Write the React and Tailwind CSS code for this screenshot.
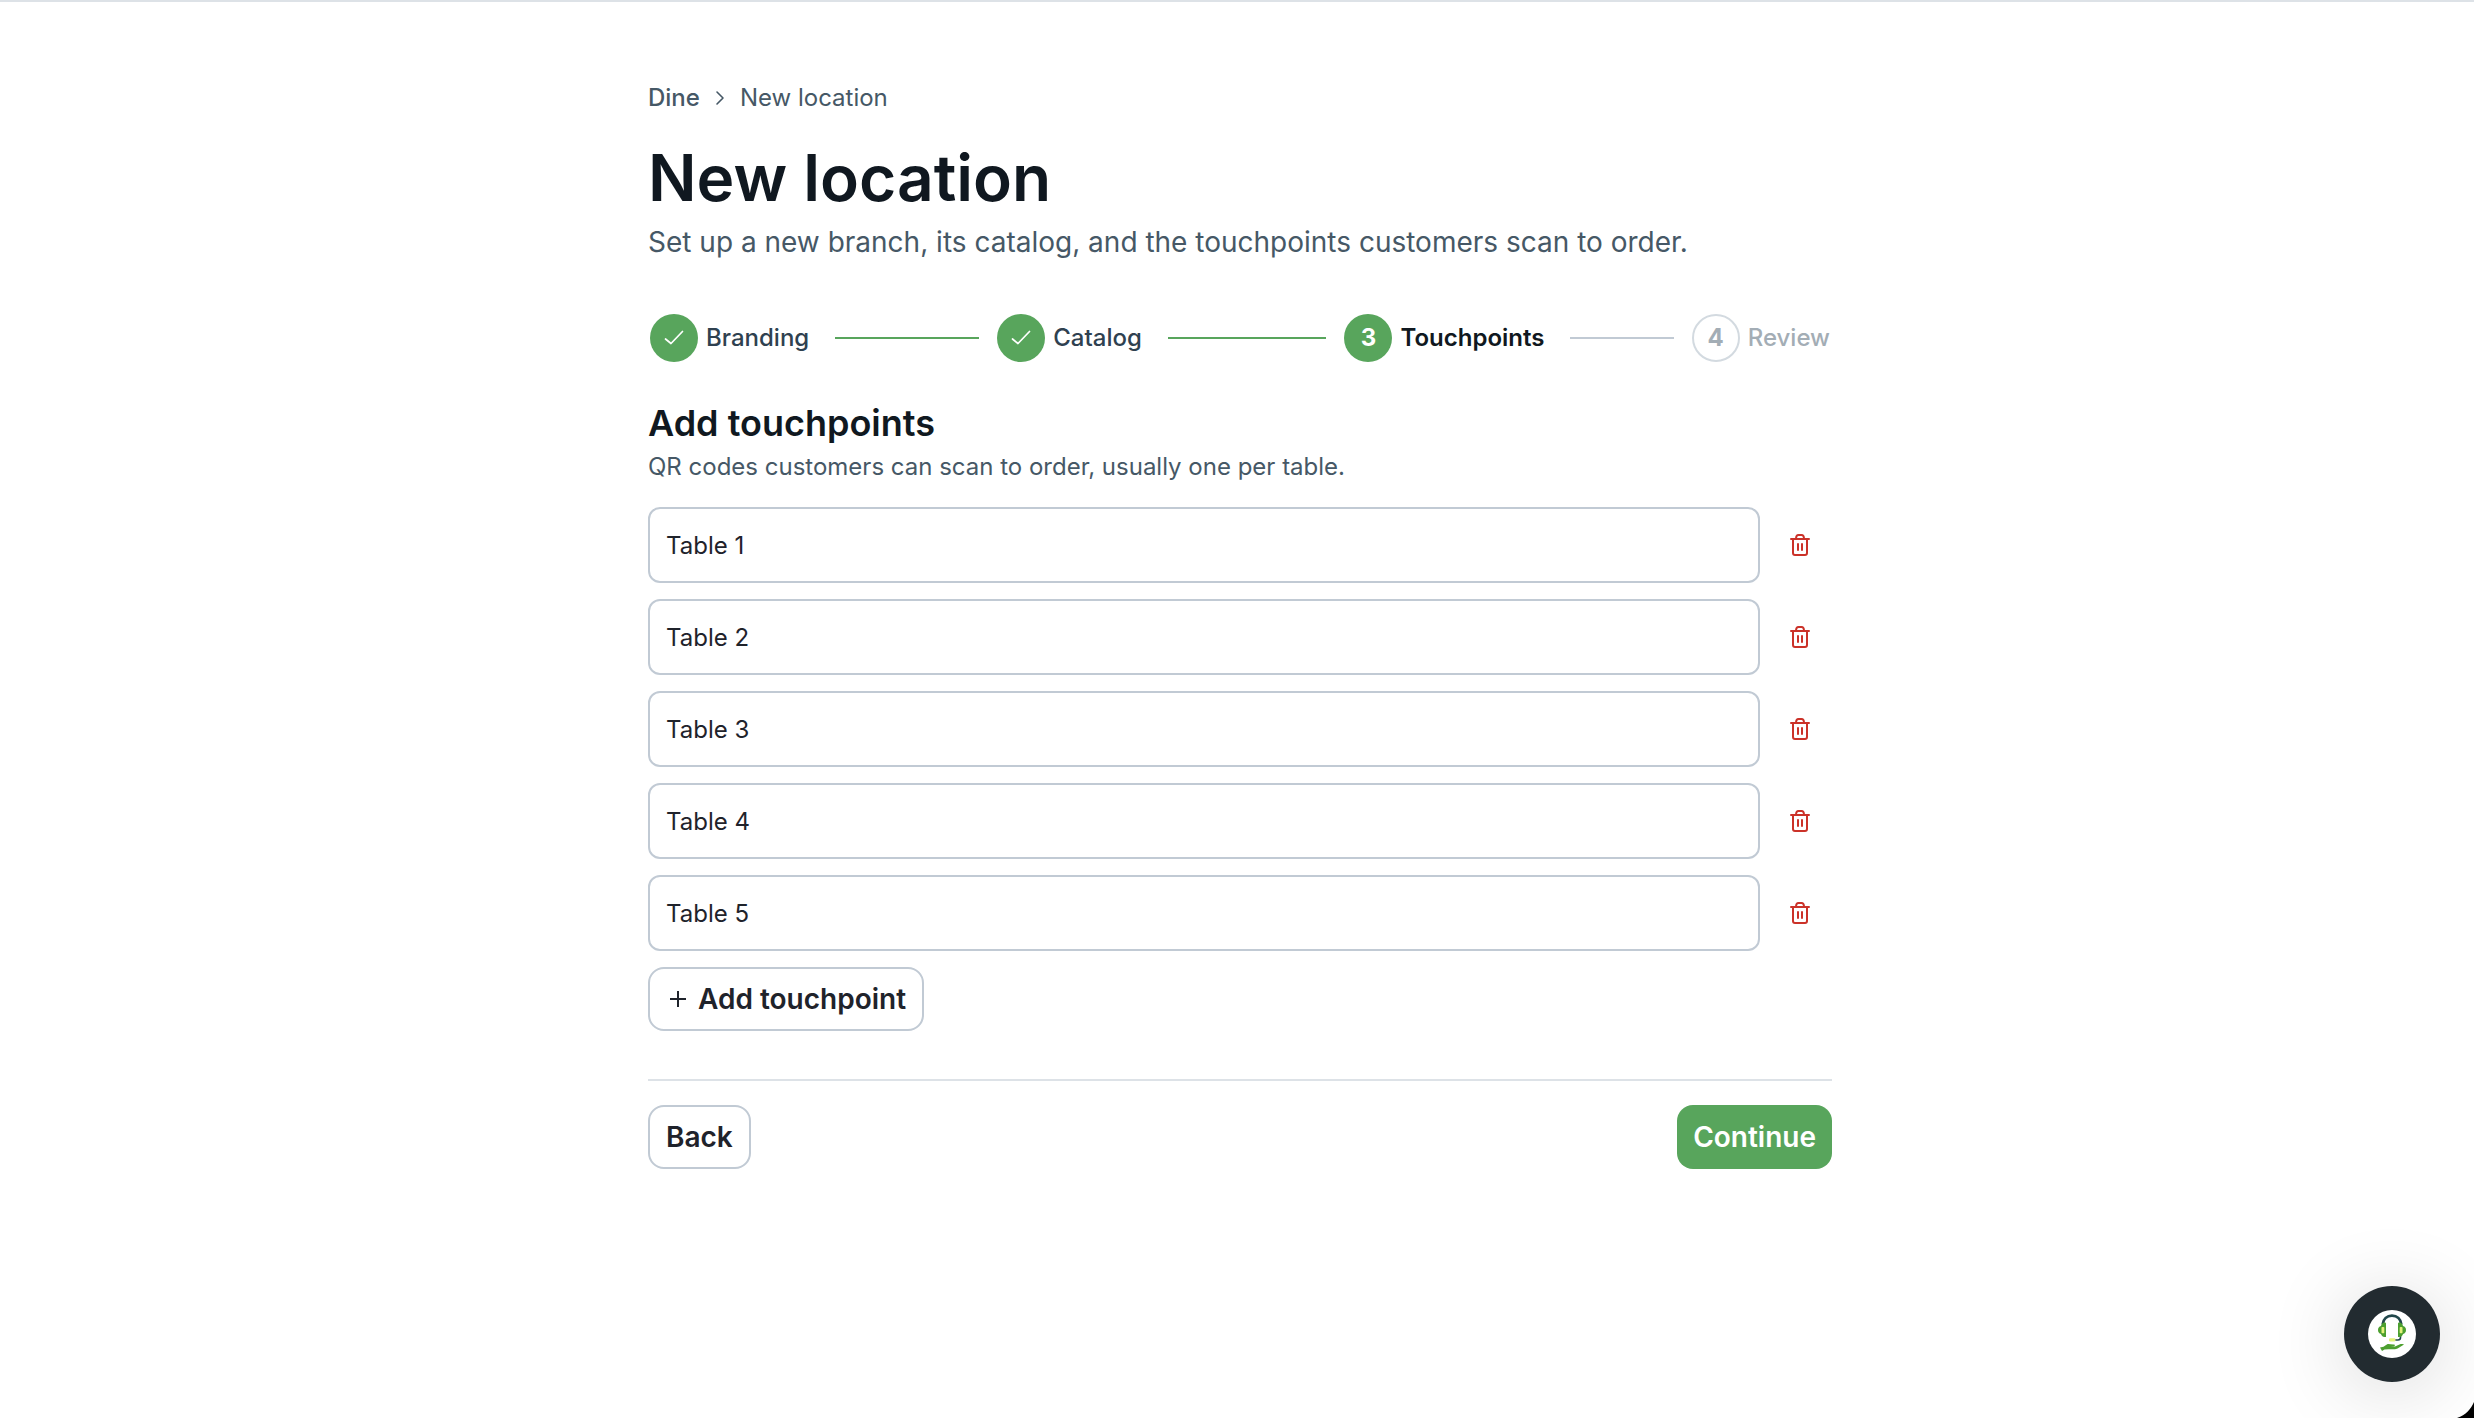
import { useState } from "react";

const STEPS = ["Branding", "Catalog", "Touchpoints", "Review"];
const CURRENT = 2;

function CheckIcon() {
  return (
    <svg viewBox="0 0 24 24" className="size-6" fill="none" stroke="currentColor" strokeWidth="1.7" strokeLinecap="round" strokeLinejoin="round" aria-hidden="true">
      <path d="M3.5 13 9 17.500 20.500 5.500" />
    </svg>
  );
}

function TrashIcon() {
  return (
    <svg viewBox="0 0 24 24" className="size-6" fill="none" stroke="currentColor" strokeWidth="2" strokeLinecap="round" strokeLinejoin="round" aria-hidden="true">
      <path d="M3 6h18M8 6c0-2.600 1-4 2.500-4h3C15 2 16 3.400 16 6M5 6v14a2 2 0 0 0 2 2h10a2 2 0 0 0 2-2V6" />
      <path d="M10 11v6M14 11v6" />
    </svg>
  );
}

function SupportIcon() {
  return (
    <svg viewBox="0 0 48 48" className="size-12" fill="none" aria-hidden="true">
      <circle cx="24" cy="24" r="24" fill="#fff" />
      {/* headset */}
      <path d="M14.700 14.500C15.200 9 19 5.700 24 5.700s8.800 3.300 9.300 8.800" stroke="#21474b" strokeWidth="2.800" />
      <path d="M32.500 26v1.500q0 2.500-2.500 2.500H27" stroke="#21474b" strokeWidth="1.600" />
      <path d="M18 13.500V27h-1.500c-2 0-3.200-1.500-3.500-3-2-.500-3-2-3-4s1-3.500 3-4c.300-1.500 1.500-3.500 3.500-3.500.900 0 1.500.400 1.500 1z" fill="#4c9f2f" />
      <path d="M30 13.500V27h1.500c2 0 3.200-1.500 3.500-3 2-.500 3-2 3-4s-1-3.500-3-4c-.300-1.500-1.500-3.500-3.500-3.500-.900 0-1.500.400-1.500 1z" fill="#4c9f2f" />
      <rect x="13.500" y="17" width="2.800" height="6.200" rx=".8" fill="#e3f27a" />
      <rect x="31.700" y="17" width="2.800" height="6.200" rx=".8" fill="#e3f27a" />
      <rect x="21" y="28.300" width="6.500" height="3.200" rx="1.300" fill="#e3f27a" />
      {/* open hand */}
      <path d="M12 37.500l3.500-.8 3.700-2.500c1.800-.5 4 .5 6.800.3 1.300 0 1.300 1.500 0 1.700l-3.500.3h4.500l5-2.300c1.500-.5 3.500-.2 4 .3l-6 3.800c-1.500.8-2.500 1-4 1h-5.500l-4 .2-2.500 1.500z" fill="#4c9f2f" />
    </svg>
  );
}

function Step({ label, index }) {
  const done = index < CURRENT;
  const active = index === CURRENT;
  const last = index === STEPS.length - 1;

  return (
    <li className={`flex items-center ${last ? "" : "flex-1"}`} aria-current={active ? "step" : undefined}>
      <span
        className={`flex size-12 shrink-0 items-center justify-center rounded-full text-2xl font-bold ${
          done || active ? "bg-[#58a55c] text-white" : "border-2 border-[#d3dae0] text-[#a3adb5]"
        }`}
      >
        {done ? <CheckIcon /> : index + 1}
      </span>
      <span
        className={`ml-2 text-2xl ${
          active ? "font-semibold text-[#101820]" : done ? "font-medium text-[#2f4150]" : "font-medium text-[#a3adb5]"
        }`}
      >
        {label}
      </span>
      {!last && <span className={`ml-[26px] mr-[18px] h-0.5 flex-1 ${done ? "bg-[#58a55c]" : "bg-[#c1cad4]"}`} />}
    </li>
  );
}

export default function App() {
  const [tables, setTables] = useState(["Table 1", "Table 2", "Table 3", "Table 4", "Table 5"]);

  const rename = (i, value) => setTables(tables.map((t, n) => (n === i ? value : t)));
  const remove = (i) => setTables(tables.filter((_, n) => n !== i));
  const add = () => setTables([...tables, `Table ${tables.length + 1}`]);

  return (
    <div className="min-h-screen border-t-2 border-[#dde2e7] bg-white pl-1.5 font-['Inter',sans-serif] text-[#1f232b]">
      <main className="mx-auto max-w-[1184px] pt-20 pb-24">
        <nav aria-label="Breadcrumb" className="flex items-center gap-3 text-2xl text-[#465866]">
          <a href="#" className="font-medium">Dine</a>
          <svg viewBox="0 0 16 16" className="size-4" fill="none" stroke="currentColor" strokeWidth="1.6" strokeLinecap="round" strokeLinejoin="round" aria-hidden="true">
            <path d="M5 2l6 6-6 6" />
          </svg>
          <span>New location</span>
        </nav>

        <h1 className="mt-6 text-[64px] leading-[80px] font-semibold text-[#101820]">New location</h1>
        <p className="mt-1 text-[28px] leading-10 text-[#465866]">
          Set up a new branch, its catalog, and the touchpoints customers scan to order.
        </p>

        {/* Wizard progress */}
        <ol className="mt-13 flex px-0.5">
          {STEPS.map((label, i) => (
            <Step key={label} label={label} index={i} />
          ))}
        </ol>

        <h2 className="mt-[37px] text-4xl leading-12 font-semibold text-[#101820]">Add touchpoints</h2>
        <p className="mt-1 text-2xl text-[#465866]">QR codes customers can scan to order, usually one per table.</p>

        <ul className="mt-6 space-y-4">
          {tables.map((name, i) => (
            <li key={i} className="flex items-center gap-2">
              <input
                aria-label={`Touchpoint ${i + 1}`}
                value={name}
                onChange={(e) => rename(i, e.target.value)}
                className="h-19 min-w-0 flex-1 rounded-xl border-2 border-[#c1cad4] bg-white px-4 text-2xl"
              />
              <button
                type="button"
                aria-label={`Remove ${name}`}
                onClick={() => remove(i)}
                className="flex size-16 items-center justify-center text-[#cb3229]"
              >
                <TrashIcon />
              </button>
            </li>
          ))}
        </ul>

        <button
          type="button"
          onClick={add}
          className="mt-4 flex h-16 items-center gap-2 rounded-2xl border-2 border-[#c1cad4] px-4 text-[28px] font-semibold"
        >
          <svg viewBox="0 0 24 24" className="size-6" fill="none" stroke="currentColor" strokeWidth="2" aria-hidden="true">
            <path d="M12 4v16M4 12h16" />
          </svg>
          Add touchpoint
        </button>

        <div className="mt-12 flex justify-between border-t-2 border-[#dde2e7] pt-6">
          <button type="button" className="h-16 rounded-2xl border-2 border-[#c1cad4] px-4 text-[28px] font-semibold">
            Back
          </button>
          <button type="button" className="h-16 rounded-2xl bg-[#58a55c] px-4 text-[28px] font-semibold text-white">
            Continue
          </button>
        </div>
      </main>

      {/* Support chat launcher */}
      <button
        type="button"
        aria-label="Open support chat"
        className="fixed right-[34px] bottom-9 flex size-24 items-center justify-center rounded-full bg-[#222b30] shadow-[0_8px_80px_rgba(0,0,0,0.16)]"
      >
        <SupportIcon />
      </button>

      {/* Rounded window corner */}
      <svg viewBox="0 0 20 20" className="fixed right-0 bottom-0 size-5" aria-hidden="true">
        <path d="M20 4C17 11 12 17 3 20H20z" fill="#000" />
      </svg>
    </div>
  );
}
